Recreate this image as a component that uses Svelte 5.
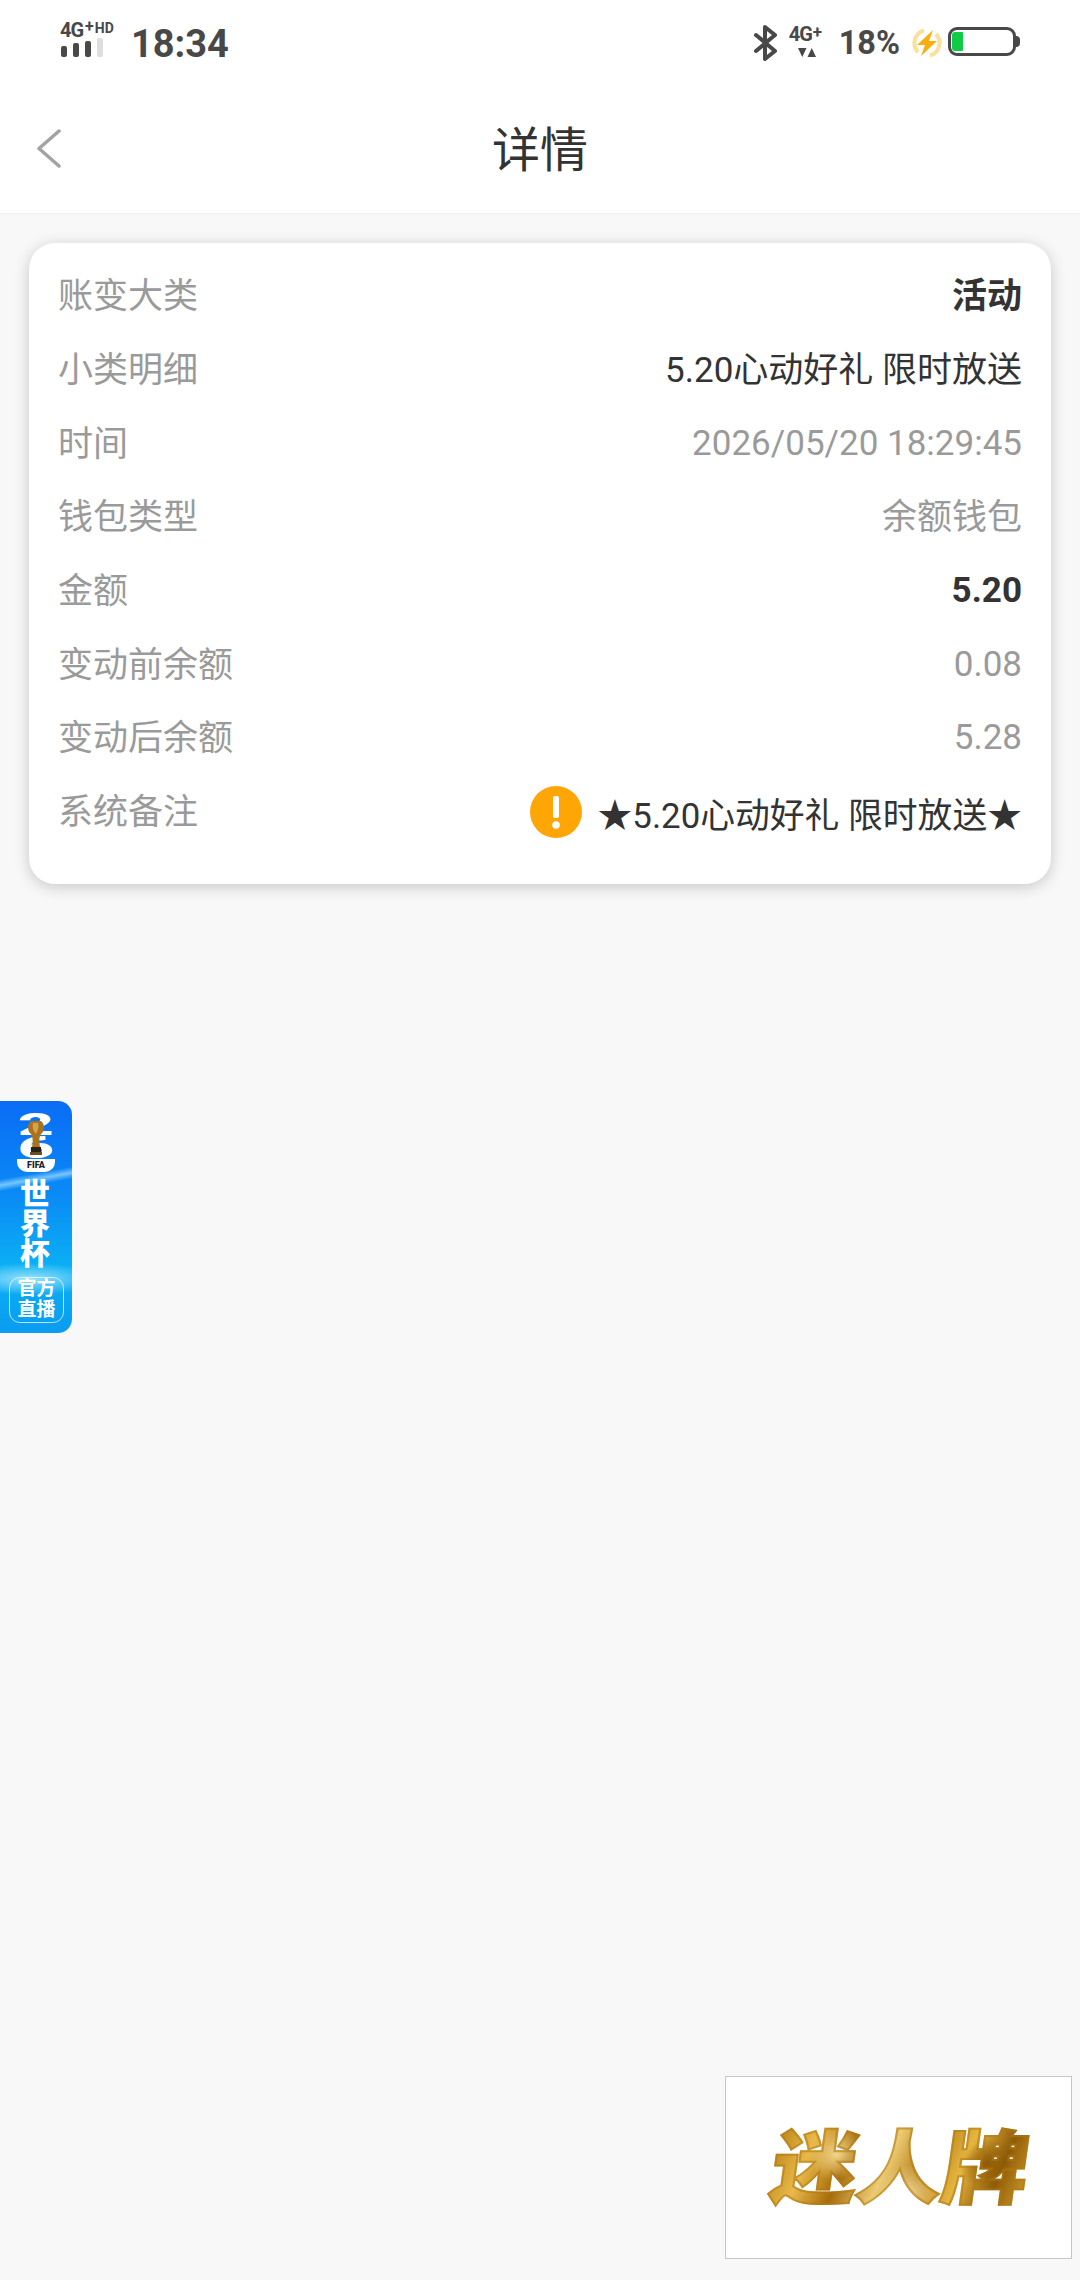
<script>
  const rows = [
    { label: "账变大类", value: "活动", kind: "strong cjk" },
    { label: "小类明细", value: "5.20心动好礼 限时放送", kind: "dark cjk" },
    { label: "时间", value: "2026/05/20 18:29:45", kind: "muted" },
    { label: "钱包类型", value: "余额钱包", kind: "muted cjk" },
    { label: "金额", value: "5.20", kind: "strong" },
    { label: "变动前余额", value: "0.08", kind: "muted" },
    { label: "变动后余额", value: "5.28", kind: "muted" }
  ];
</script>

<div class="page">
  <div class="status">
    <div class="statusLeft">
      <div class="signal">
        <div class="netLabel">4G<span class="plus">+</span><span class="hd">HD</span></div>
        <div class="bars"><i></i><i></i><i></i><i class="off"></i></div>
      </div>
      <span class="clock">18:34</span>
    </div>
    <div class="statusRight">
      <svg class="bt" width="24" height="36" viewBox="0 0 24 36">
        <path d="M2 10 L21 26 L11 34 V2 L21 10 L2 26" fill="none" stroke="#484848" stroke-width="4" stroke-linejoin="round" stroke-linecap="round"/>
      </svg>
      <div class="net2">
        <div class="net2Label">4G<span>+</span></div>
        <svg width="18" height="9" viewBox="0 0 18 9"><path d="M0 0H8.500L4.250 9Z M9.500 9H18L13.750 0Z" fill="#484848"/></svg>
      </div>
      <span class="pct">18%</span>
      <svg class="bolt" width="30" height="30" viewBox="0 0 30 30">
        <path d="M6 24 A13 13 0 0 1 12 2.500" fill="none" stroke="#fae09a" stroke-width="4"/>
        <path d="M24 6 A13 13 0 0 1 18 27.500" fill="none" stroke="#fae09a" stroke-width="4"/>
        <path d="M21 2 L5 17 H13 L9 28 L25 13 H17 Z" fill="#f9ae10"/>
      </svg>
      <div class="battery"><div class="level"></div></div>
    </div>
  </div>

  <header class="nav">
    <svg class="back" width="26" height="40" viewBox="0 0 26 40">
      <path d="M23 2 L3 19.500 L23 37" fill="none" stroke="#a3a3a3" stroke-width="3.500" stroke-linecap="round" stroke-linejoin="round"/>
    </svg>
    <h1>详情</h1>
  </header>

  <main class="content">
    <section class="card">
      {#each rows as row}
        <div class="row">
          <span class="label">{row.label}</span>
          <span class="value {row.kind}">{row.value}</span>
        </div>
      {/each}
      <div class="row noteRow">
        <span class="label">系统备注</span>
        <div class="note">
          <svg width="52" height="52" viewBox="0 0 52 52">
            <circle cx="26" cy="26" r="26" fill="#ffa506"/>
            <rect x="23" y="10" width="6" height="22" rx="2" fill="#fff"/>
            <circle cx="26" cy="39" r="3.800" fill="#fff"/>
          </svg>
          <span class="noteText">★5.20心动好礼 限时放送★</span>
        </div>
      </div>
    </section>
  </main>

  <aside class="cup">
    <div class="badge">
      <span class="badgeNum">2</span>
      <span class="badgeNum">6</span>
      <div class="badgeFoot">FIFA</div>
      <svg class="trophy" width="16" height="36" viewBox="0 0 16 36">
        <path d="M3 1 C-1 4 -1 11 3 14 C5 17 5 22 4 27 H12 C11 22 11 17 13 14 C17 11 17 4 13 1 Z" fill="#a8721f"/>
        <path d="M5 3 C4 7 5 11 8 14 C10 10 11 6 10 3 Z" fill="#d6a24a"/>
        <rect x="3" y="27" width="10" height="5" fill="#2a2114"/>
        <rect x="2" y="32" width="12" height="3" fill="#6a5020"/>
      </svg>
    </div>
    <div class="cupTitle">世<br />界<br />杯</div>
    <div class="liveBox">官方<br />直播</div>
  </aside>

  <div class="brand"><span>迷人牌</span></div>
</div>

<style>
  :global(body) {
    margin: 0;
    background: #f8f8f8;
  }

  .page {
    position: relative;
    width: 1080px;
    height: 2280px;
    overflow: hidden;
    background: #f8f8f8;
    font-family: "Roboto", "Noto Sans CJK SC", sans-serif;
  }

  .status {
    height: 86px;
    box-sizing: border-box;
    padding: 18px 60px 0 60px;
    display: flex;
    justify-content: space-between;
    background: #fff;
    color: #484848;
  }

  .statusLeft {
    display: flex;
    align-items: flex-start;
    gap: 13px;
  }

  .signal {
    width: 58px;
    padding-top: 4px;
  }

  .netLabel {
    display: flex;
    align-items: flex-start;
    height: 15px;
    font-size: 20px;
    line-height: 16px;
    font-weight: 700;
    letter-spacing: -1px;
    white-space: nowrap;
  }

  .plus {
    font-size: 16px;
    line-height: 10px;
    margin-left: 2px;
  }

  .hd {
    font-size: 14px;
    line-height: 12px;
    margin-left: 2px;
    letter-spacing: 0;
  }

  .bars {
    display: flex;
    align-items: flex-end;
    gap: 6px;
    height: 20px;
    padding-left: 1px;
  }

  .bars i {
    display: block;
    width: 6px;
    height: 11px;
    border-radius: 2px;
    background: #484848;
  }

  .bars i:nth-child(2) {
    height: 14px;
  }

  .bars i:nth-child(3) {
    height: 16px;
  }

  .bars i.off {
    height: 19px;
    background: #dedede;
  }

  .clock {
    margin-top: 4px;
    font-size: 38px;
    line-height: 44px;
    font-weight: 700;
  }

  .statusRight {
    display: flex;
    align-items: flex-start;
    height: 44px;
  }

  .bt {
    margin-top: 7px;
  }

  .net2 {
    width: 36px;
    margin-left: 11px;
    padding-top: 9px;
  }

  .net2Label {
    font-size: 20px;
    line-height: 15px;
    font-weight: 700;
    letter-spacing: -1px;
    white-space: nowrap;
  }

  .net2Label span {
    position: relative;
    top: -3px;
    margin-left: 1px;
    font-size: 17px;
  }

  .net2 svg {
    display: block;
    margin: 5px 0 0 9px;
  }

  .pct {
    margin: 3px 0 0 14px;
    font-size: 32.500px;
    line-height: 44px;
    font-weight: 700;
  }

  .bolt {
    margin: 10px 0 0 12px;
  }

  .battery {
    position: relative;
    width: 68px;
    height: 29px;
    box-sizing: border-box;
    margin: 9px 4px 0 6px;
    padding: 2px 1px;
    border: 3px solid #484848;
    border-radius: 9px;
  }

  .battery::after {
    content: "";
    position: absolute;
    right: -7px;
    top: 6px;
    width: 4px;
    height: 11px;
    border-radius: 0 4px 4px 0;
    background: #484848;
  }

  .level {
    width: 11px;
    height: 100%;
    border-radius: 3px 1px 1px 3px;
    background: #0fcb45;
  }

  .nav {
    position: relative;
    height: 128px;
    box-sizing: border-box;
    display: flex;
    align-items: center;
    justify-content: center;
    background: #fff;
    border-bottom: 1px solid #f0f0f0;
  }

  .back {
    position: absolute;
    left: 36px;
    top: 43px;
  }

  h1 {
    margin: 0;
    padding-top: 2px;
    font-size: 48px;
    line-height: 64px;
    font-weight: 400;
    color: #333;
  }

  .content {
    padding: 29px 29px 0;
  }

  .card {
    box-sizing: border-box;
    height: 641px;
    padding: 15px 29px 0;
    background: #fff;
    border-radius: 26px;
    box-shadow: 0 3px 16px rgba(0, 0, 0, 0.2);
  }

  .row {
    display: flex;
    justify-content: space-between;
    align-items: center;
    height: 73.700px;
    font-size: 35px;
  }

  .label {
    padding-bottom: 4px;
    color: #9a9a9a;
  }

  .value {
    padding-top: 2px;
  }

  .value.cjk {
    padding-top: 0;
    padding-bottom: 4px;
  }

  .value.strong {
    color: #333;
    font-weight: 700;
  }

  .value.dark {
    color: #333;
  }

  .value.muted {
    color: #9a9a9a;
  }

  .note {
    display: flex;
    align-items: center;
    gap: 16px;
    padding-top: 3px;
    color: #333;
  }

  .noteText {
    padding-top: 2px;
    font-size: 34.800px;
  }

  .cup {
    position: absolute;
    left: 0;
    top: 1101px;
    width: 72px;
    height: 232px;
    box-sizing: border-box;
    padding: 12px 0 0 9px;
    overflow: hidden;
    border-radius: 0 14px 14px 0;
    background:
      radial-gradient(ellipse 70px 16px at 30px 178px, rgba(200, 244, 255, 0.75), transparent),
      linear-gradient(170deg, transparent 32%, rgba(190, 240, 255, 0.6) 34.500%, transparent 37%),
      linear-gradient(180deg, #0a6cf5 0%, #0a8af6 40%, #0bb0f4 72%, #0a9cf0 100%);
  }

  .badge {
    position: relative;
    width: 54px;
    height: 59px;
  }

  .badgeNum {
    display: block;
    height: 23px;
    text-align: center;
    font-size: 31px;
    line-height: 23px;
    font-weight: 900;
    color: #fff;
    transform: scaleX(2);
  }

  .badgeFoot {
    width: 38px;
    height: 13px;
    margin-left: 8px;
    border-radius: 0 0 10px 10px;
    background: #fff;
    text-align: center;
    font-size: 9px;
    line-height: 12px;
    font-weight: 900;
    color: #222;
  }

  .trophy {
    position: absolute;
    left: 19px;
    top: 7px;
  }

  .cupTitle {
    width: 52px;
    margin-top: 7px;
    text-align: center;
    font-size: 30px;
    line-height: 30px;
    font-weight: 900;
    color: #fff;
  }

  .liveBox {
    box-sizing: border-box;
    width: 55px;
    height: 46px;
    margin-top: 8px;
    border: 1px solid rgba(255, 255, 255, 0.7);
    border-radius: 11px;
    text-align: center;
    font-size: 19px;
    line-height: 21px;
    font-weight: 700;
    color: #fff;
  }

  .brand {
    position: absolute;
    left: 725px;
    top: 2076px;
    width: 347px;
    height: 183px;
    box-sizing: border-box;
    display: flex;
    align-items: center;
    justify-content: center;
    background: #fff;
    border: 1px solid #c6c6c6;
    padding-top: 5px;
  }

  .brand span {
    display: block;
    padding-left: 2px;
    font-size: 80px;
    line-height: 92px;
    font-weight: 900;
    letter-spacing: -1px;
    transform: skewX(-8deg) scaleX(1.08);
    color: transparent;
    -webkit-text-stroke: 2px rgba(176, 120, 16, 0.55);
    background:
      radial-gradient(circle 26px at 60px 30px, #f0d58a, transparent),
      radial-gradient(circle 30px at 130px 70px, #f3dc9c, transparent),
      radial-gradient(circle 24px at 200px 40px, #8e5a06, transparent),
      linear-gradient(105deg, #b47d10 0%, #e9b94a 16%, #a86c0a 30%, #eccb74 45%, #b27a12 58%, #e5b540 72%, #8f5c08 86%, #d39e2c 100%);
    -webkit-background-clip: text;
    background-clip: text;
  }
</style>
